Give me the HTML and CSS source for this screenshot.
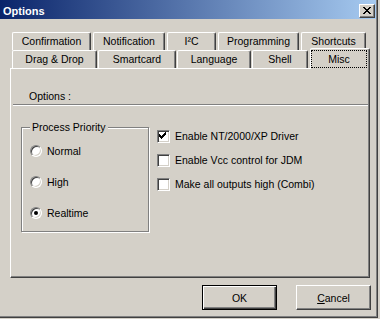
FILE: index.html
```
<!doctype html>
<html lang="en-US">

  <head>
    <meta charset="utf-8">
    <meta name="viewport" content="width=device-width, initial-scale=1">
    <title>Options</title>
    <link rel="stylesheet" href="styles.css">
  </head>

  <body>
    <div class="window">
      <div class="titlebar">
        <span class="title">Options</span>
        <span class="close">
          <svg width="14" height="12" viewBox="0 0 14 12" shape-rendering="crispEdges">
            <path fill="#000" d="M3 2h2v1h-2z M9 2h2v1h-2z M4 3h2v1h-2z M8 3h2v1h-2z M5 4h4v1h-4z M6 5h2v1h-2z M5 6h4v1h-4z M4 7h2v1h-2z M8 7h2v1h-2z M3 8h2v1h-2z M9 8h2v1h-2z"/>
          </svg>
        </span>
      </div>

      <div class="tabs">
        <div class="tab-row back">
          <div class="tab">Confirmation</div>
          <div class="tab">Notification</div>
          <div class="tab">I²C</div>
          <div class="tab">Programming</div>
          <div class="tab">Shortcuts</div>
        </div>
        <div class="tab-row front">
          <div class="tab">Drag &amp; Drop</div>
          <div class="tab">Smartcard</div>
          <div class="tab">Language</div>
          <div class="tab">Shell</div>
          <div class="tab active"><span class="focus">Misc</span></div>
        </div>
      </div>

      <div class="panel">
        <div class="section-title">Options :</div>
        <div class="separator"></div>
        <div class="misc-body">
          <fieldset class="group">
            <legend>Process Priority</legend>
            <label class="option"><span class="radio"></span>Normal</label>
            <label class="option"><span class="radio"></span>High</label>
            <label class="option"><span class="radio checked"></span>Realtime</label>
          </fieldset>
          <div class="checks">
            <label class="option">
              <span class="checkbox">
                <svg width="11" height="11" viewBox="0 0 11 11" shape-rendering="crispEdges">
                  <path fill="#000" d="M1 3h1v3h-1z M2 4h1v3h-1z M3 5h1v3h-1z M4 4h1v3h-1z M5 3h1v3h-1z M6 2h1v3h-1z M7 1h1v3h-1z"/>
                </svg>
              </span>
              Enable NT/2000/XP Driver
            </label>
            <label class="option"><span class="checkbox"></span>Enable Vcc control for JDM</label>
            <label class="option"><span class="checkbox"></span>Make all outputs high (Combi)</label>
          </div>
        </div>
      </div>

      <div class="buttons">
        <button class="btn default">OK</button>
        <button class="btn"><u>C</u>ancel</button>
      </div>
    </div>
  </body>

</html>
```

FILE: styles.css
```
html,
body {
  margin: 0;
  padding: 0;
}

body {
  background: #d4d0c8;
  color: #000;
  font-family: "Liberation Sans", Arial, sans-serif;
  font-size: 10.5px;
}

.window {
  width: 378px;
  height: 318px;
  box-sizing: border-box;
  padding: 0 1px 1px 0;
  border-right: 1px solid #404040;
  border-bottom: 1px solid #404040;
  box-shadow: inset -1px -1px 0 #808080;
  display: flex;
  flex-direction: column;
}

/* title bar */

.titlebar {
  height: 19px;
  box-sizing: border-box;
  padding: 4px 1px 0 3px;
  display: flex;
  justify-content: space-between;
  align-items: flex-start;
  background: linear-gradient(to right, #0a246a, #a6caf0);
  color: #fff;
  font-size: 11px;
  font-weight: bold;
}

.title {
  line-height: 14px;
}

.close {
  width: 16px;
  height: 14px;
  box-sizing: border-box;
  display: flex;
  background: #d4d0c8;
  border: 1px solid;
  border-color: #fff #404040 #404040 #fff;
  box-shadow: inset -1px -1px 0 #808080;
}

/* tabs */

.tabs {
  margin: 13px 0 0 12px;
}

.tab-row {
  display: grid;
  height: 18px;
}

.back {
  grid-template-columns: 79px 72px 49px 81px 65px;
  column-gap: 2px;
}

.front {
  grid-template-columns: 85px 78px 74px 56px 58px;
  column-gap: 1px;
}

.tab {
  box-sizing: border-box;
  border: 1px solid;
  border-bottom: 0;
  border-color: #fff #404040 transparent #fff;
  border-radius: 2px 2px 0 0;
  box-shadow: inset -1px 0 0 #808080;
  text-align: center;
  line-height: 17px;
  white-space: nowrap;
}

.tab.active {
  position: relative;
  z-index: 1;
  margin: -2px -3px -1px 1px;
  background: #d4d0c8;
}

.focus {
  display: block;
  margin: 1px 2px 0 0;
  height: 18px;
  box-sizing: border-box;
  border: 1px dotted #000;
  line-height: 16px;
}

/* panel */

.panel {
  margin-left: 10px;
  width: 360px;
  height: 210px;
  box-sizing: border-box;
  border: 1px solid;
  border-color: #fff #404040 #404040 #fff;
  box-shadow: inset -1px -1px 0 #808080;
}

.section-title {
  padding: 21px 0 0 18px;
  line-height: 13px;
}

.separator {
  margin: 1px 1px 0 2px;
  border-top: 1px solid #808080;
  border-bottom: 1px solid #fff;
}

.misc-body {
  display: flex;
  align-items: flex-start;
  gap: 8px;
  margin: 15px 0 0 10px;
}

.group {
  margin: 0;
  padding: 0 0 0 8px;
  min-width: 0;
  width: 128px;
  height: 111px;
  box-sizing: border-box;
  border: 1px solid #808080;
  box-shadow: inset 1px 1px 0 #fff, 1px 1px 0 #fff;
}

.group legend {
  padding: 0 2px;
  line-height: 13px;
  background: #d4d0c8;
}

.option {
  display: flex;
  align-items: center;
  gap: 5px;
  white-space: nowrap;
}

.group .option {
  height: 12px;
  line-height: 12px;
  margin-top: 11px;
}

.group .option + .option {
  margin-top: 19px;
}

.checks {
  margin-top: 9px;
}

.checks .option {
  height: 13px;
  line-height: 13px;
}

.checks .option + .option {
  margin-top: 11px;
}

.radio {
  position: relative;
  width: 12px;
  height: 12px;
  box-sizing: border-box;
  border-radius: 50%;
  background: #fff;
  border: 1px solid;
  border-color: #808080 #fff #fff #808080;
  box-shadow: inset 1px 1px 0 #404040, inset -1px -1px 0 #d4d0c8;
}

.radio.checked::after {
  content: "";
  position: absolute;
  left: 3px;
  top: 3px;
  width: 4px;
  height: 4px;
  border-radius: 50%;
  background: #000;
}

.checkbox {
  width: 13px;
  height: 13px;
  box-sizing: border-box;
  display: flex;
  background: #fff;
  border: 1px solid;
  border-color: #808080 #fff #fff #808080;
  box-shadow: inset 1px 1px 0 #404040, inset -1px -1px 0 #d4d0c8;
}

/* buttons */

.buttons {
  display: flex;
  justify-content: flex-end;
  gap: 19px;
  margin-top: 7px;
  padding-right: 5px;
}

.btn {
  width: 75px;
  height: 25px;
  box-sizing: border-box;
  padding: 0;
  font: inherit;
  color: #000;
  background: #d4d0c8;
  border: 1px solid;
  border-color: #fff #404040 #404040 #fff;
  box-shadow: inset -1px -1px 0 #808080;
}

.btn.default {
  border-color: #000;
  box-shadow: inset 1px 1px 0 #fff, inset -1px -1px 0 #404040, inset -2px -2px 0 #808080;
}
```
